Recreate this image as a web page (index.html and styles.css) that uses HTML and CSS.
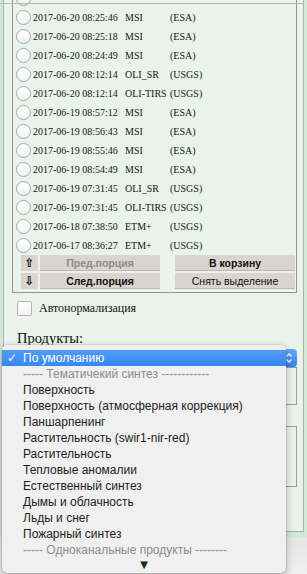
FILE: index.html
```html
<!DOCTYPE html>
<html lang="ru">
<head>
    <meta charset="UTF-8">
    <meta name="viewport" content="width=device-width, initial-scale=1.0">
    <title>Сцены</title>
    <link rel="stylesheet" href="styles.css">
</head>
<body>
    <div class="viewport">
        <div class="panel">
            <div class="listbox">
                <div class="row"><span class="radio"></span></div>
                <div class="row"><span class="radio"></span><span class="date">2017-06-20 08:25:46</span><span class="sensor">MSI</span><span class="src">(ESA)</span></div>
                <div class="row"><span class="radio"></span><span class="date">2017-06-20 08:25:18</span><span class="sensor">MSI</span><span class="src">(ESA)</span></div>
                <div class="row"><span class="radio"></span><span class="date">2017-06-20 08:24:49</span><span class="sensor">MSI</span><span class="src">(ESA)</span></div>
                <div class="row"><span class="radio"></span><span class="date">2017-06-20 08:12:14</span><span class="sensor">OLI_SR</span><span class="src">(USGS)</span></div>
                <div class="row"><span class="radio"></span><span class="date">2017-06-20 08:12:14</span><span class="sensor">OLI-TIRS</span><span class="src">(USGS)</span></div>
                <div class="row"><span class="radio"></span><span class="date">2017-06-19 08:57:12</span><span class="sensor">MSI</span><span class="src">(ESA)</span></div>
                <div class="row"><span class="radio"></span><span class="date">2017-06-19 08:56:43</span><span class="sensor">MSI</span><span class="src">(ESA)</span></div>
                <div class="row"><span class="radio"></span><span class="date">2017-06-19 08:55:46</span><span class="sensor">MSI</span><span class="src">(ESA)</span></div>
                <div class="row"><span class="radio"></span><span class="date">2017-06-19 08:54:49</span><span class="sensor">MSI</span><span class="src">(ESA)</span></div>
                <div class="row"><span class="radio"></span><span class="date">2017-06-19 07:31:45</span><span class="sensor">OLI_SR</span><span class="src">(USGS)</span></div>
                <div class="row"><span class="radio"></span><span class="date">2017-06-19 07:31:45</span><span class="sensor">OLI-TIRS</span><span class="src">(USGS)</span></div>
                <div class="row"><span class="radio"></span><span class="date">2017-06-18 07:38:50</span><span class="sensor">ETM+</span><span class="src">(USGS)</span></div>
                <div class="row"><span class="radio"></span><span class="date">2017-06-17 08:36:27</span><span class="sensor">ETM+</span><span class="src">(USGS)</span></div>

                <div class="pager">
                    <span class="arrow">&#8679;</span>
                    <button class="btn bold dim">Пред.порция</button>
                    <button class="btn bold right">В корзину</button>
                    <span class="arrow">&#8681;</span>
                    <button class="btn bold">След.порция</button>
                    <button class="btn right">Снять выделение</button>
                </div>
            </div>

            <div class="auto"><span class="checkbox"></span>Автонормализация</div>

            <div class="products-title">Продукты:</div>
            <div class="select">
                <span class="stepper">
                    <svg width="8" height="12" viewBox="0 0 8 12"><path d="M1.5 4.5 L4 2 L6.5 4.5 M1.5 7.5 L4 10 L6.5 7.5" fill="none" stroke="#fff" stroke-width="1.3"/></svg>
                </span>
            </div>
            <div class="box box-a"></div>
            <div class="box box-b"></div>
        </div>
        <div class="topline"></div>
    </div>
    <div class="statusbar"></div>

    <div class="popup">
        <div class="opt selected"><span class="mark">&#10003;</span>По умолчанию</div>
        <div class="opt sep"><span class="mark"></span>----- Тематичекий синтез ------------</div>
        <div class="opt"><span class="mark"></span>Поверхность</div>
        <div class="opt"><span class="mark"></span>Поверхность (атмосферная коррекция)</div>
        <div class="opt"><span class="mark"></span>Паншарпенинг</div>
        <div class="opt"><span class="mark"></span>Растительность (swir1-nir-red)</div>
        <div class="opt"><span class="mark"></span>Растительность</div>
        <div class="opt"><span class="mark"></span>Тепловые аномалии</div>
        <div class="opt"><span class="mark"></span>Естественный синтез</div>
        <div class="opt"><span class="mark"></span>Дымы и облачность</div>
        <div class="opt"><span class="mark"></span>Льды и снег</div>
        <div class="opt"><span class="mark"></span>Пожарный синтез</div>
        <div class="opt sep"><span class="mark"></span>----- Одноканальные продукты --------</div>
        <div class="more">&#9660;</div>
    </div>
</body>
</html>
```

FILE: styles.css
```css
body {
    margin: 0;
    padding: 0;
    background-color: #ebebeb;
    font-family: "Liberation Serif", "Times New Roman", serif;
    color: #111;
}
.viewport {
    position: relative;
    height: 537px;
    overflow: hidden;
    background-color: #d3e8d6;
}
.topline {
    position: absolute;
    top: 3px;
    left: 0;
    width: 304px;
    height: 1px;
    background: #b4bbb5;
}
.panel {
    margin: -21px 0 0 3px;
    width: 299px;
    height: 551px;
    border: 1px solid #a9b0aa;
    background-color: #e9f3eb;
}
.listbox {
    margin: 6px 0 0 8px;
    width: 283px;
    padding: 2px 0 3px 0;
    border: 1px solid #8f948f;
}
.row {
    display: flex;
    align-items: center;
    height: 19px;
    padding-left: 3px;
    font-size: 10px;
    color: #151515;
}
.radio {
    width: 13px;
    height: 13px;
    border: 1px solid #a7a7a7;
    border-radius: 50%;
    background: linear-gradient(#ffffff, #f1f1f1);
    margin-right: 2px;
    flex: none;
}
.date {
    width: 92px;
}
.sensor {
    width: 45px;
}
.pager {
    display: grid;
    grid-template-columns: 17px 120px 133px;
    grid-auto-rows: 16px;
    column-gap: 2px;
    row-gap: 2px;
    padding-left: 8px;
}
.arrow {
    display: flex;
    align-items: center;
    justify-content: center;
    background-color: #d9d4cf;
    font-family: "DejaVu Sans", sans-serif;
    font-size: 12px;
    font-weight: bold;
    color: #000;
}
.btn {
    height: 16px;
    padding: 0;
    border: none;
    border-bottom: 1px solid #bdb8b3;
    background-color: #d9d4cf;
    font-family: "Liberation Sans", Arial, sans-serif;
    font-size: 10.5px;
    color: #111;
}
.btn.bold {
    font-weight: bold;
}
.btn.dim {
    color: #8e8b88;
}
.btn.right {
    margin-left: 13px;
}
.auto {
    display: flex;
    align-items: center;
    margin: 8px 0 0 13px;
    font-size: 12px;
}
.checkbox {
    width: 13px;
    height: 13px;
    border: 1px solid #b5b5b5;
    border-radius: 2px;
    background: linear-gradient(#ffffff, #f3f3f5);
    margin-right: 7px;
}
.products-title {
    margin: 14px 0 0 13px;
    font-size: 14.5px;
    line-height: 16px;
}
.select {
    display: flex;
    justify-content: flex-end;
    margin: 3px 0 0 8px;
    width: 285px;
    height: 18px;
    border-radius: 4px;
    background: #fff;
}
.stepper {
    display: flex;
    align-items: center;
    justify-content: center;
    width: 16px;
    height: 18px;
    border-radius: 0 4px 4px 0;
    background: linear-gradient(#69abf8, #2f83f2);
}
.box {
    margin-left: 8px;
    width: 283px;
    border: 1px solid #9a9f9a;
}
.box-a {
    margin-top: 0;
    height: 36px;
}
.box-b {
    margin-top: 21px;
    height: 59px;
}
.statusbar {
    height: 37px;
    background: linear-gradient(#e6e6e6, #f0f0f0);
}
.popup {
    position: absolute;
    left: 2px;
    top: 345px;
    width: 284px;
    height: 228px;
    padding-top: 5px;
    box-sizing: border-box;
    background: #f0f0f0;
    border-radius: 5px;
    box-shadow: 0 0 0 0.5px rgba(0, 0, 0, 0.15), 0 3px 9px rgba(0, 0, 0, 0.28);
    font-family: "Liberation Sans", Arial, sans-serif;
    font-size: 12px;
    color: #1c1c1c;
}
.opt {
    height: 16px;
    line-height: 16px;
    padding-left: 5px;
    white-space: nowrap;
}
.mark {
    display: inline-block;
    width: 16px;
    font-family: "DejaVu Sans", sans-serif;
    font-weight: bold;
    font-size: 12px;
}
.opt.selected {
    background: linear-gradient(#519cf7, #3588f4);
    color: #fff;
}
.opt.sep {
    color: #8c8c8c;
}
.more {
    height: 14px;
    line-height: 14px;
    text-align: center;
    font-family: "DejaVu Sans", sans-serif;
    font-size: 10px;
    color: #222;
}
```
